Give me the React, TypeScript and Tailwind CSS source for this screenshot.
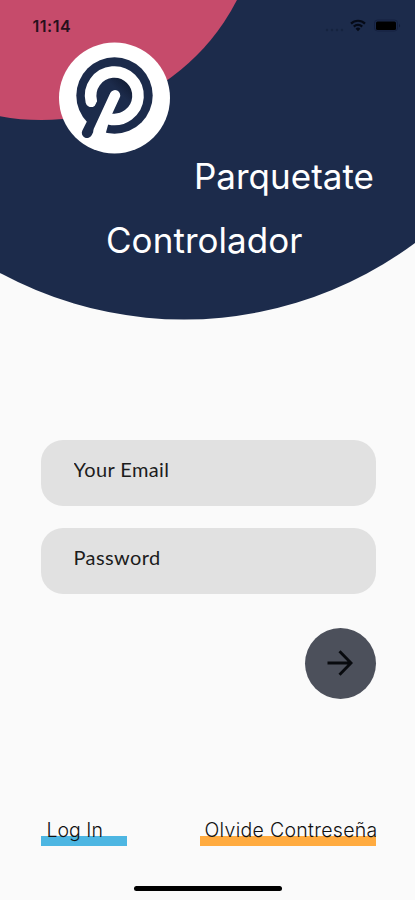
import { useState } from 'react';

function StatusBar() {
  return (
    <div className="flex justify-between pl-[32.5px] pr-[14px] pt-[16px] h-[43px] text-black">
      <span className="text-[16px] leading-[20px] tracking-[0.5px] font-semibold font-['Inter',sans-serif] text-[#26101c]">11:14</span>
      <div className="flex items-start pt-[3px]">
        <svg width="20" height="14" viewBox="0 0 20 14" className="mr-[5px]" fill="#16233f">
          <circle cx="2" cy="11" r="1.2" />
          <circle cx="7" cy="11" r="1.2" />
          <circle cx="12" cy="11" r="1.2" />
          <circle cx="17" cy="11" r="1.2" />
        </svg>
        <svg width="16" height="13" viewBox="0 0 16 13" className="mr-[8px]" fill="none" stroke="#050a16" strokeWidth="2.2">
          <path d="M1 4.6 A10 10 0 0 1 15 4.6" />
          <path d="M3.8 7.6 A6 6 0 0 1 12.2 7.6" />
          <path d="M8 12.2 L5.6 9.8 A3.4 3.4 0 0 1 10.4 9.8 Z" fill="#050a16" stroke="none" />
        </svg>
        <svg width="27" height="13" viewBox="0 0 27 13">
          <rect x="0.5" y="1" width="23" height="11" rx="3" fill="none" stroke="#142040" />
          <rect x="2" y="2.5" width="20" height="8.5" rx="1.5" fill="#000" />
          <path d="M25 4.5 Q26.8 6.5 25 8.5 Z" fill="#101a34" />
        </svg>
      </div>
    </div>
  );
}

function Logo() {
  return (
    <svg width="112" height="112" viewBox="58 42 112 112" className="block">
      <defs>
        <linearGradient id="shade" x1="0" y1="1" x2="1" y2="0">
          <stop offset="0.6" stopColor="#1c2b4b" />
          <stop offset="1" stopColor="#0c1428" />
        </linearGradient>
      </defs>
      <circle cx="114.5" cy="98" r="55.5" fill="#fff" />
      <circle cx="114.5" cy="95.5" r="38.2" fill="#1c2b4b" />
      {/* opening at the bottom of the ring */}
      <path d="M108.3 124 L105.4 134.5 L86 136 L100 112 L112 114 Z" fill="#fff" />
      <circle cx="114.5" cy="95.5" r="18.5" fill="url(#shade)" />
      <path d="M91.3 101.3 A23.7 23.7 0 1 1 109 118.8" fill="none" stroke="#fff" strokeWidth="11.6" strokeLinecap="round" />
      <path d="M105 97 L87 132.8" stroke="#1c2b4b" strokeWidth="10.4" strokeLinecap="round" />
      <path d="M115 95.3 L98.5 131" stroke="#fff" strokeWidth="10.4" strokeLinecap="round" />
    </svg>
  );
}

export default function App() {
  const [form, setForm] = useState({ email: '', password: '' });

  const handleChange = (e: React.ChangeEvent<HTMLInputElement>) => {
    setForm({ ...form, [e.target.name]: e.target.value });
  };

  const inputClass =
    "block w-full h-[66px] rounded-[22px] bg-[#e1e1e1] pl-[33px] pr-4 pb-[8px] text-[20px] tracking-[0.4px] font-normal font-['Lato',sans-serif] text-[#1c1c1c] placeholder:text-[#1c1c1c] placeholder:opacity-100 outline-none";

  return (
    <div className="w-[415px] h-[900px] overflow-hidden flex flex-col bg-[#fafafa] font-['Inter',sans-serif]">
      <header className="relative isolate h-[320px] shrink-0">
        <svg width="415" height="320" viewBox="0 0 415 320" className="absolute inset-0 -z-10">
          <circle cx="184" cy="-67.5" r="387" fill="#1c2b4b" />
          <circle cx="41" cy="-100" r="220" fill="#c64b6b" />
        </svg>
        <StatusBar />
        <div className="-mt-px pl-[58px]">
          <Logo />
        </div>
        <h1 className="text-white text-[35px] leading-[64px]">
          <span className="block mt-[-10px] pl-[194px]">Parquetate</span>
          <span className="block pl-[106px] tracking-[0.05px]">Controlador</span>
        </h1>
      </header>

      <form className="mt-[119.5px] pl-[40.5px] pr-[39.5px] flex flex-col" onSubmit={(e) => e.preventDefault()}>
        <div className="flex flex-col gap-[22.5px]">
          <input
            type="email"
            name="email"
            value={form.email}
            onChange={handleChange}
            placeholder="Your Email"
            className={inputClass}
          />
          <input
            type="password"
            name="password"
            value={form.password}
            onChange={handleChange}
            placeholder="Password"
            className={inputClass}
          />
        </div>
        <button
          type="submit"
          className="mt-[33.5px] self-end w-[71px] h-[71px] rounded-full bg-[#4c505b] flex items-center justify-center"
        >
          <svg width="26" height="26" viewBox="0 0 26 26" fill="none" stroke="#080a0e" strokeWidth="2.9">
            <path d="M0.5 13 H24 M12.5 1.3 L24 13 L12.5 24.7" />
          </svg>
        </button>
      </form>

      <div className="mt-[117px] pl-[40.5px] pr-[39.5px] flex justify-between text-[19.5px] leading-[28px] font-light text-[#111]">
        <button className="w-[86px] h-[30px] pb-[2px] pl-[6px] text-left whitespace-nowrap bg-[linear-gradient(#4db6e2,#4db6e2)] bg-no-repeat bg-bottom bg-[length:100%_10px]">
          Log In
        </button>
        <button className="w-[176px] h-[30px] pb-[2px] pl-[5px] tracking-[0.3px] text-left whitespace-nowrap bg-[linear-gradient(#ffab40,#ffab40)] bg-no-repeat bg-bottom bg-[length:100%_10px]">
          Olvide Contreseña
        </button>
      </div>

      <div className="mt-auto mb-[9px] mx-auto w-[148px] h-[5px] rounded-full bg-black" />
    </div>
  );
}
